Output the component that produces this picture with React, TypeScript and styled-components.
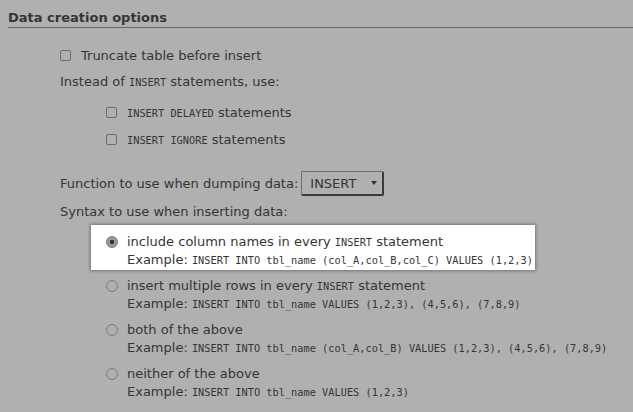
import React from "react";
import styled, { createGlobalStyle } from "styled-components";

const Global = createGlobalStyle`
  html, body { margin: 0; padding: 0; background: #b0b0b0; }
  body { font-family: "DejaVu Sans", sans-serif; color: #353535; }
`;

const Page = styled.div`
  width: 633px;
  height: 412px;
  overflow: hidden;
  background: #b0b0b0;
  padding: 9px 0 0 8px;
  box-sizing: border-box;
`;

const Heading = styled.h2`
  margin: 0;
  font-size: 13px;
  font-weight: bold;
  line-height: 17px;
  color: #353535;
  padding-bottom: 1px;
  border-bottom: 1px solid #6a6a6a;
`;

const Body = styled.div`
  padding-left: 52px;
  padding-top: 19px;
  display: flex;
  flex-direction: column;
  font-size: 13px;
`;

const Row = styled.div<{ $indent?: number; $mt?: number }>`
  display: flex;
  align-items: center;
  height: 17px;
  margin-left: ${(p) => p.$indent ?? 0}px;
  margin-top: ${(p) => p.$mt ?? 0}px;
  white-space: nowrap;
`;

const Box = styled.span`
  width: 9px;
  height: 9px;
  border: 1px solid #6c6c6c;
  border-radius: 2px;
  margin-right: 10px;
  flex: none;
`;

const Mono = styled.span`
  font-family: "DejaVu Sans Mono", monospace;
  font-size: 10.3px;
`;

const Select = styled.div`
  display: flex;
  align-items: center;
  width: 83px;
  height: 25px;
  box-sizing: border-box;
  border: 1px solid #6f6f6f;
  border-right: 2px solid #3a3a3a;
  border-bottom: 2px solid #3a3a3a;
  border-radius: 2px;
  padding-left: 8px;
  margin-left: 3px;
  position: relative;
  font-size: 13px;
`;

const Arrow = styled.span`
  position: absolute;
  right: 5px;
  top: 9px;
  width: 0;
  height: 0;
  border-left: 3px solid transparent;
  border-right: 3px solid transparent;
  border-top: 4px solid #333;
`;

const Options = styled.div`
  display: flex;
  flex-direction: column;
  margin-left: 31px;
  margin-top: 5px;
`;

const Option = styled.div<{ $active?: boolean }>`
  width: 444px;
  box-sizing: border-box;
  padding: 8px 0 0 15px;
  height: ${(p) => (p.$active ? 45 : 44)}px;
  background: ${(p) => (p.$active ? "#ffffff" : "transparent")};
  box-shadow: ${(p) => (p.$active ? "0 0 3px 1px rgba(0,0,0,0.35)" : "none")};
  margin-bottom: ${(p) => (p.$active ? -1 : 0)}px;
  position: relative;
`;

const Radio = styled.span<{ $checked?: boolean }>`
  width: 10px;
  height: 10px;
  border: 1px solid #787878;
  border-radius: 50%;
  margin-right: 9px;
  flex: none;
  box-sizing: content-box;
  background: ${(p) =>
    p.$checked
      ? "radial-gradient(circle, #333 0 2px, #9a9a9a 2.5px 100%)"
      : "transparent"};
`;

const Example = styled.div`
  margin-left: 21px;
  margin-top: 1px;
  height: 17px;
  display: flex;
  align-items: center;
  white-space: pre;
`;

const opts = [
  {
    label: (
      <>
        include column names in every&nbsp;<Mono>INSERT</Mono>&nbsp;statement
      </>
    ),
    ex: "INSERT INTO tbl_name (col_A,col_B,col_C) VALUES (1,2,3)",
  },
  {
    label: (
      <>
        insert multiple rows in every&nbsp;<Mono>INSERT</Mono>&nbsp;statement
      </>
    ),
    ex: "INSERT INTO tbl_name VALUES (1,2,3), (4,5,6), (7,8,9)",
  },
  {
    label: <>both of the above</>,
    ex: "INSERT INTO tbl_name (col_A,col_B) VALUES (1,2,3), (4,5,6), (7,8,9)",
  },
  {
    label: <>neither of the above</>,
    ex: "INSERT INTO tbl_name VALUES (1,2,3)",
  },
];

export default function App() {
  return (
    <Page>
      <Global />
      <Heading>Data creation options</Heading>
      <Body>
        <Row>
          <Box />
          Truncate table before insert
        </Row>
        <Row $mt={9}>
          Instead of&nbsp;<Mono>INSERT</Mono>&nbsp;statements, use:
        </Row>
        <Row $indent={46} $mt={14}>
          <Box />
          <Mono>INSERT DELAYED</Mono>&nbsp;statements
        </Row>
        <Row $indent={46} $mt={10}>
          <Box />
          <Mono>INSERT IGNORE</Mono>&nbsp;statements
        </Row>
        <Row $mt={27}>
          Function to use when dumping data:
          <Select>
            INSERT
            <Arrow />
          </Select>
        </Row>
        <Row $mt={11}>Syntax to use when inserting data:</Row>
        <Options>
          {opts.map((o, i) => (
            <Option key={i} $active={i === 0}>
              <Row>
                <Radio $checked={i === 0} />
                {o.label}
              </Row>
              <Example>
                Example: <Mono>{o.ex}</Mono>
              </Example>
            </Option>
          ))}
        </Options>
      </Body>
    </Page>
  );
}
